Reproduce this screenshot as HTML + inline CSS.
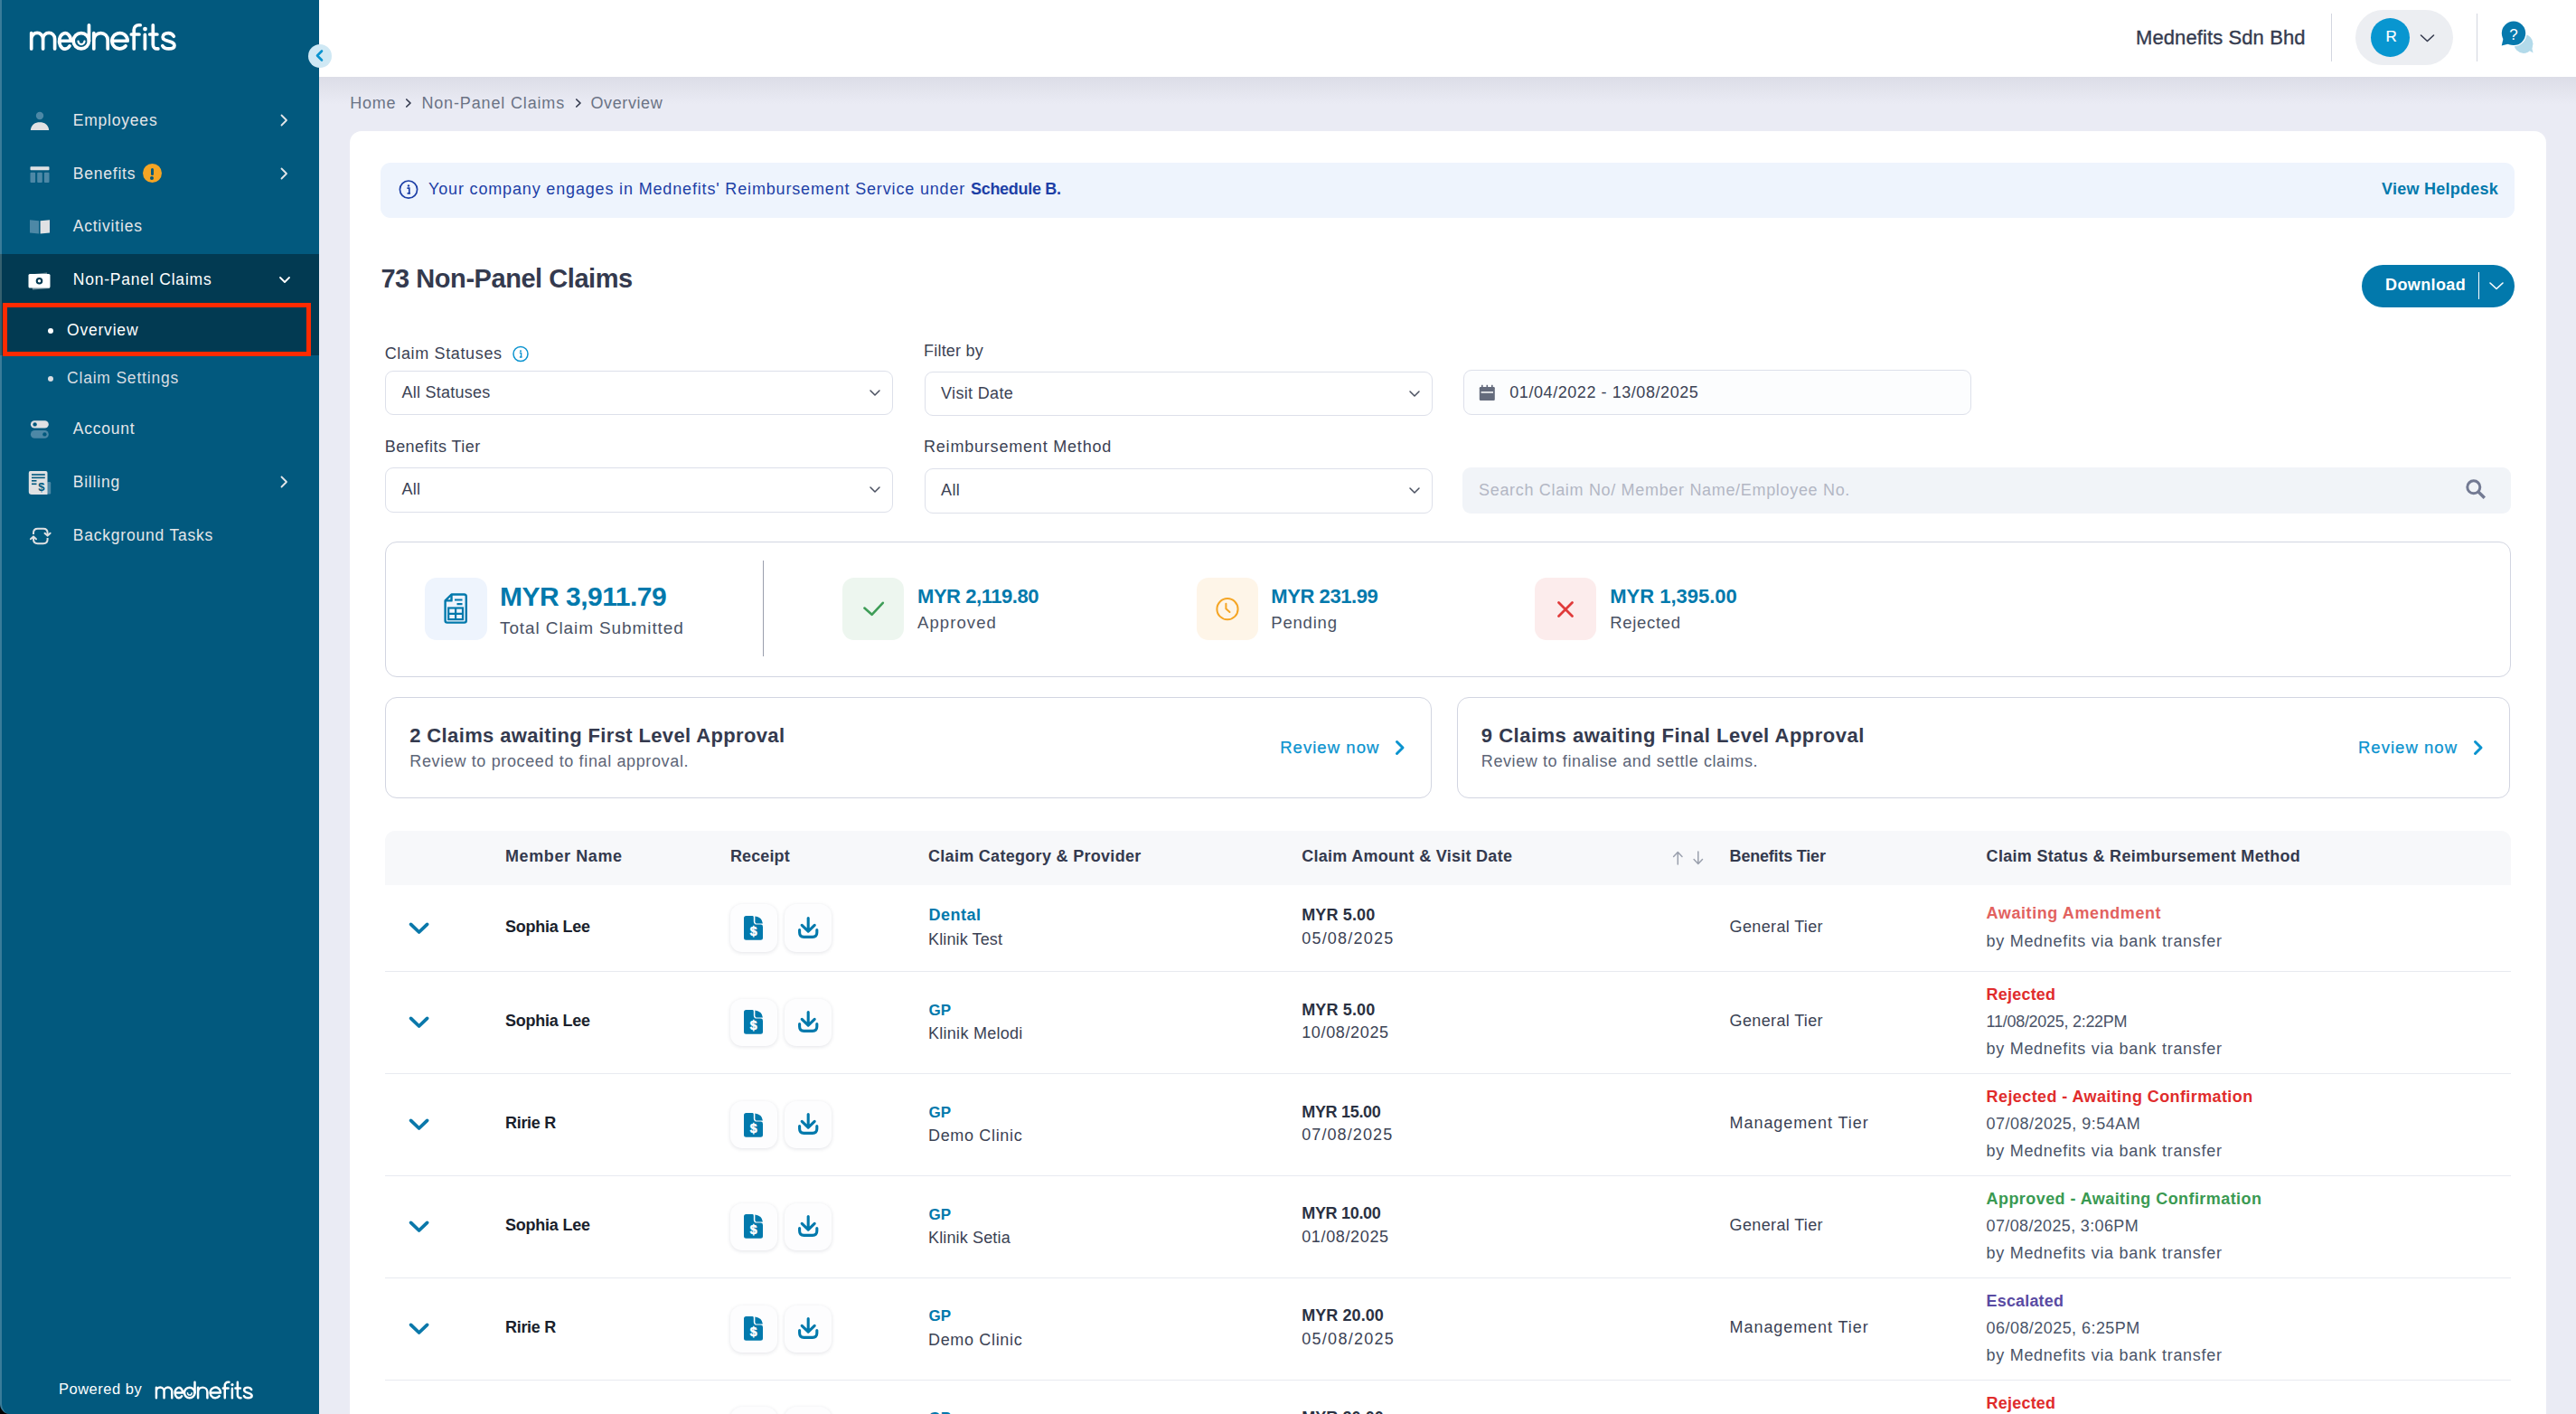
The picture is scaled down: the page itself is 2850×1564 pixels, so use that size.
<!DOCTYPE html><html><head><meta charset="utf-8"><title>Non-Panel Claims</title><style>
*{box-sizing:border-box}
html,body{margin:0;padding:0}
body{width:2850px;height:1564px;overflow:hidden;position:relative;background:#EAEBF4;font-family:"Liberation Sans",sans-serif}
.t{position:absolute;white-space:nowrap;line-height:1}
.logo{color:#fff;-webkit-text-stroke:0.9px #fff;font-weight:400}
#sb{position:absolute;left:0;top:0;width:353px;height:1564px;background:#02597E;border-left:2px solid #3A7C99;border-bottom-left-radius:11px}
#top{position:absolute;left:353px;top:0;width:2497px;height:85px;background:#FFFFFF}
#topshadow{position:absolute;left:353px;top:85px;width:2497px;height:30px;background:linear-gradient(#DCDDE7,#EAEBF4)}
#card{position:absolute;left:387px;top:145px;width:2430px;height:1500px;background:#FFFFFF;border-radius:13px}
.sel{position:absolute;border:1.3px solid #DDE0EA;border-radius:9px;background:#FFFFFF}
.box{position:absolute;border:1.3px solid #D2D5E1;border-radius:13px;background:#FFFFFF}
.rbtn{position:absolute;width:52.4px;height:52.4px;border-radius:13px;background:#FDFDFE;box-shadow:0 1px 4px rgba(30,40,70,0.13)}
</style></head><body>
<div style="position:absolute;left:0;top:1544px;width:20px;height:20px;background:#000"></div>
<div id="sb"></div>
<svg style="position:absolute;left:0;top:0" width="220" height="70" viewBox="0 0 220 70"><g fill="none" stroke="#FFFFFF" stroke-width="3.7" stroke-linecap="round" stroke-linejoin="round">
<path d="M34.7 36.6 V54 M34.7 42.9 A6.45 6.45 0 0 1 47.6 42.9 V54 M47.6 42.9 A6.5 6.5 0 0 1 60.6 42.9 V54"/>
<path d="M65.55 45.25 H81 M78.45 45.25 A6.45 8.65 0 1 0 77 50.9"/>
<circle cx="89.8" cy="45.25" r="8.65"/>
<path d="M98.45 27.8 V45.25"/>
<path d="M86.5 45.6 A3.5 3.5 0 0 0 93.5 45.6" stroke-width="2.2"/>
<path d="M103.8 36.6 V54 M103.8 44.25 A7.7 7.7 0 0 1 119.2 44.25 V54"/>
<path d="M123.85 45.25 H141.15 A8.65 8.65 0 1 0 139.1 50.8"/>
<path d="M148.2 54 V33 A5.2 5.2 0 0 1 153.4 27.75 H155.2 M145.3 38 H154"/>
<path d="M160.4 38.4 V54"/>
<path d="M169.3 27.8 V49.5 A4.45 4.45 0 0 0 173.75 53.95 H174.85 M165.7 38 H173.9"/>
<path d="M192.3 40.2 C191 37.5 188.5 36.55 186.2 36.55 C182.5 36.55 180.1 38.3 180.1 40.9 C180.1 43.6 182.5 44.4 186.3 45.5 C190.5 46.7 193 47.5 193 50.2 C193 52.6 190.3 53.95 186.5 53.95 C183.2 53.95 180.8 52.5 179.8 50.6"/>
</g><circle cx="160.5" cy="32.05" r="2.4" fill="#FFFFFF"/></svg>
<div style="position:absolute;left:2px;top:281px;width:351px;height:112px;background:#023A52"></div>
<div style="position:absolute;left:0;top:281px;width:2px;height:112px;background:#35606F"></div>
<div class="t " style="left:80.7px;top:125.2px;font-size:17.5px;color:#E4E6E9;letter-spacing:0.8px;">Employees</div>
<svg style="position:absolute;left:307px;top:125.2px" width="14" height="16" viewBox="0 0 14 16"><path d="M4.5 2.5 L10 8 L4.5 13.5" fill="none" stroke="#E4E6E9" stroke-width="1.8" stroke-linecap="round" stroke-linejoin="round"/></svg>
<div class="t " style="left:80.7px;top:184.4px;font-size:17.5px;color:#E4E6E9;letter-spacing:0.8px;">Benefits</div>
<svg style="position:absolute;left:307px;top:184.4px" width="14" height="16" viewBox="0 0 14 16"><path d="M4.5 2.5 L10 8 L4.5 13.5" fill="none" stroke="#E4E6E9" stroke-width="1.8" stroke-linecap="round" stroke-linejoin="round"/></svg>
<div class="t " style="left:80.7px;top:242.0px;font-size:17.5px;color:#E4E6E9;letter-spacing:0.8px;">Activities</div>
<div class="t " style="left:80.7px;top:301.4px;font-size:17.5px;color:#FFFFFF;letter-spacing:0.8px;">Non-Panel Claims</div>
<svg style="position:absolute;left:307px;top:303.4px" width="16" height="14" viewBox="0 0 16 14"><path d="M3 4 L8 9 L13 4" fill="none" stroke="#FFFFFF" stroke-width="1.8" stroke-linecap="round" stroke-linejoin="round"/></svg>
<div class="t " style="left:80.7px;top:466.2px;font-size:17.5px;color:#E4E6E9;letter-spacing:0.8px;">Account</div>
<div class="t " style="left:80.7px;top:525.2px;font-size:17.5px;color:#E4E6E9;letter-spacing:0.8px;">Billing</div>
<svg style="position:absolute;left:307px;top:525.2px" width="14" height="16" viewBox="0 0 14 16"><path d="M4.5 2.5 L10 8 L4.5 13.5" fill="none" stroke="#E4E6E9" stroke-width="1.8" stroke-linecap="round" stroke-linejoin="round"/></svg>
<div class="t " style="left:80.7px;top:584.2px;font-size:17.5px;color:#E4E6E9;letter-spacing:0.8px;">Background Tasks</div>
<div style="position:absolute;left:53px;top:363px;width:6px;height:6px;border-radius:50%;background:#fff"></div>
<div class="t " style="left:74.0px;top:356.9px;font-size:17.5px;color:#FFFFFF;letter-spacing:0.8px;">Overview</div>
<div style="position:absolute;left:53px;top:416px;width:6px;height:6px;border-radius:50%;background:#D8DDE2"></div>
<div class="t " style="left:74.0px;top:410.0px;font-size:17.5px;color:#D8DDE2;letter-spacing:0.8px;">Claim Settings</div>
<div style="position:absolute;left:3px;top:335px;width:341px;height:58.7px;border:5px solid #FF2A00"></div>
<svg style="position:absolute;left:30px;top:118px" width="30" height="30" viewBox="0 0 30 30">
<circle cx="14" cy="10" r="4.2" fill="#4D88A6"/>
<path d="M3.8 25.9 C4.5 19.5 9 17.2 14 17.2 C19 17.2 23.5 19.5 24.2 25.9 Z" fill="#E0E1E3"/></svg>
<svg style="position:absolute;left:30px;top:180px" width="30" height="30" viewBox="0 0 30 30">
<rect x="3.5" y="4.3" width="21" height="4" rx="0.8" fill="#E0E1E3"/>
<rect x="3.5" y="10.8" width="5.6" height="11.2" rx="1" fill="#4D88A6"/>
<rect x="11.2" y="10.8" width="5.6" height="11.2" rx="1" fill="#4D88A6"/>
<rect x="18.9" y="10.8" width="5.6" height="11.2" rx="1" fill="#4D88A6"/></svg>
<div style="position:absolute;left:157.7px;top:181.3px;width:21px;height:21px;border-radius:50%;background:#F5A524"></div>
<div style="position:absolute;left:166.6px;top:185.5px;width:3.4px;height:8px;border-radius:1.5px;background:#02597E"></div>
<div style="position:absolute;left:166.4px;top:195px;width:3.8px;height:3.8px;border-radius:50%;background:#02597E"></div>
<svg style="position:absolute;left:30px;top:238px" width="30" height="26" viewBox="0 0 30 26">
<path d="M3 5.2 L13 6.2 L13 20.5 L3 19.5 Z" fill="#4D88A6"/>
<path d="M14.6 6.2 L25 5.2 L25 19.5 L14.6 20.5 Z" fill="#E0E1E3"/></svg>
<svg style="position:absolute;left:30px;top:298px" width="30" height="26" viewBox="0 0 30 26">
<path d="M3.5 5.5 L22 3.5 L25 21 L6 22.5 Z" fill="#BFC9CF" opacity="0.6"/>
<rect x="1.5" y="5" width="24" height="15.5" rx="1.5" fill="#FFFFFF"/>
<circle cx="13.5" cy="12.7" r="3.8" fill="#023A52"/><circle cx="13.5" cy="12.7" r="1.7" fill="#FFFFFF"/></svg>
<svg style="position:absolute;left:30px;top:462px" width="30" height="26" viewBox="0 0 30 26">
<rect x="3.9" y="3.2" width="19.9" height="8.4" rx="4.2" fill="#E0E1E3"/>
<circle cx="8.6" cy="7.4" r="2.2" fill="#02597E"/>
<rect x="3.9" y="14" width="19.9" height="8.8" rx="4.4" fill="#4D88A6"/>
<circle cx="19.4" cy="18.4" r="2.2" fill="#02597E"/></svg>
<svg style="position:absolute;left:30px;top:519px" width="30" height="30" viewBox="0 0 30 30">
<rect x="22" y="14" width="4.2" height="13.5" rx="1.2" fill="#4D88A6"/>
<path d="M3.5 2 H20.5 Q22.5 2 22.5 4 V28 H5 Q1.8 28 1.8 25 V4 Q1.8 2 3.5 2 Z" fill="#E0E1E3"/>
<rect x="5" y="5.2" width="14.8" height="1.6" fill="#02597E"/>
<rect x="5" y="8.6" width="14.8" height="1.6" fill="#02597E"/>
<rect x="5" y="12" width="5.5" height="1.6" fill="#02597E"/>
<rect x="5" y="15.5" width="5.5" height="1.6" fill="#02597E"/>
<text x="15.8" y="24" font-family="Liberation Sans" font-weight="700" font-size="13" fill="#02597E" text-anchor="middle">$</text></svg>
<svg style="position:absolute;left:30px;top:580px" width="30" height="26" viewBox="0 0 30 26">
<path d="M7 11 V9.5 Q7 4.8 11.7 4.8 H18 Q22.6 4.8 22.6 9.5 V11.8" fill="none" stroke="#E0E1E3" stroke-width="2"/>
<path d="M19.5 9.8 L22.6 12.6 L25.6 9.8" fill="none" stroke="#E0E1E3" stroke-width="2" stroke-linecap="round" stroke-linejoin="round"/>
<path d="M22.6 15 V16.5 Q22.6 21.2 17.9 21.2 H11.7 Q7 21.2 7 16.5 V14.2" fill="none" stroke="#E0E1E3" stroke-width="2"/>
<path d="M3.9 16.2 L7 13.4 L10 16.2" fill="none" stroke="#E0E1E3" stroke-width="2" stroke-linecap="round" stroke-linejoin="round"/></svg>
<div class="t " style="left:65.0px;top:1528.4px;font-size:16.5px;color:#FFFFFF;letter-spacing:0.5px;">Powered by</div>
<svg style="position:absolute;left:0;top:1480px" width="320" height="84" viewBox="0 1480 320 84"><g transform="translate(149.76 1510.20) scale(0.668)"><g fill="none" stroke="#FFFFFF" stroke-width="3.7" stroke-linecap="round" stroke-linejoin="round">
<path d="M34.7 36.6 V54 M34.7 42.9 A6.45 6.45 0 0 1 47.6 42.9 V54 M47.6 42.9 A6.5 6.5 0 0 1 60.6 42.9 V54"/>
<path d="M65.55 45.25 H81 M78.45 45.25 A6.45 8.65 0 1 0 77 50.9"/>
<circle cx="89.8" cy="45.25" r="8.65"/>
<path d="M98.45 27.8 V45.25"/>
<path d="M86.5 45.6 A3.5 3.5 0 0 0 93.5 45.6" stroke-width="2.2"/>
<path d="M103.8 36.6 V54 M103.8 44.25 A7.7 7.7 0 0 1 119.2 44.25 V54"/>
<path d="M123.85 45.25 H141.15 A8.65 8.65 0 1 0 139.1 50.8"/>
<path d="M148.2 54 V33 A5.2 5.2 0 0 1 153.4 27.75 H155.2 M145.3 38 H154"/>
<path d="M160.4 38.4 V54"/>
<path d="M169.3 27.8 V49.5 A4.45 4.45 0 0 0 173.75 53.95 H174.85 M165.7 38 H173.9"/>
<path d="M192.3 40.2 C191 37.5 188.5 36.55 186.2 36.55 C182.5 36.55 180.1 38.3 180.1 40.9 C180.1 43.6 182.5 44.4 186.3 45.5 C190.5 46.7 193 47.5 193 50.2 C193 52.6 190.3 53.95 186.5 53.95 C183.2 53.95 180.8 52.5 179.8 50.6"/>
</g><circle cx="160.5" cy="32.05" r="2.4" fill="#FFFFFF"/></g></svg>
<div id="top"></div>
<div id="topshadow"></div>
<div class="t " style="left:2363.0px;top:31.4px;font-size:22px;color:#343A4E;letter-spacing:0.1px;-webkit-text-stroke:0.35px #343A4E;">Mednefits Sdn Bhd</div>
<div style="position:absolute;left:2579px;top:15px;width:1px;height:53px;background:#D3D6E0"></div>
<div style="position:absolute;left:2606px;top:11px;width:108px;height:61px;border-radius:31px;background:#ECEEF2"></div>
<div style="position:absolute;left:2623px;top:19.5px;width:43px;height:43px;border-radius:50%;background:#0896D0"></div>
<div class="t " style="left:2639.5px;top:31.8px;font-size:17px;color:#FFFFFF;letter-spacing:0px;-webkit-text-stroke:0.2px #fff;">R</div>
<svg style="position:absolute;left:2676px;top:34px" width="20" height="16" viewBox="0 0 20 16"><path d="M2.5 5 L9.5 11.5 L16.5 5" fill="none" stroke="#343A4E" stroke-width="1.6" stroke-linecap="round" stroke-linejoin="round"/></svg>
<div style="position:absolute;left:2740px;top:15px;width:1px;height:53px;background:#D3D6E0"></div>
<svg style="position:absolute;left:2760px;top:18px" width="50" height="46" viewBox="0 0 50 46">
<circle cx="32" cy="30.4" r="10.5" fill="#B3DAEA"/>
<path d="M36.5 37 L42.6 40.6 L40.8 33.5 Z" fill="#B3DAEA"/>
<circle cx="21" cy="18.8" r="14.5" fill="#FFFFFF"/>
<circle cx="21" cy="18.8" r="13.2" fill="#0779AD"/>
<path d="M9.6 24.5 L7.7 32.6 L15.5 30.4 Z" fill="#0779AD"/>
<text x="21" y="26.2" font-family="Liberation Sans" font-size="17" fill="#FFFFFF" text-anchor="middle">?</text></svg>
<div style="position:absolute;left:341px;top:49px;width:26px;height:26px;border-radius:50%;background:#CFE8F4"></div>
<svg style="position:absolute;left:341px;top:49px" width="26" height="26" viewBox="0 0 26 26"><path d="M15 7.5 L10 12.5 L15 17.5" fill="none" stroke="#0A93CF" stroke-width="2.6" stroke-linecap="round" stroke-linejoin="round"/></svg>
<div class="t " style="left:387.3px;top:105.2px;font-size:18px;color:#6B7385;letter-spacing:0.75px;">Home</div>
<svg style="position:absolute;left:446px;top:106px" width="12" height="16" viewBox="0 0 12 16"><path d="M3.8 4 L8 8 L3.8 12" fill="none" stroke="#343A4E" stroke-width="1.7" stroke-linecap="round" stroke-linejoin="round"/></svg>
<div class="t " style="left:466.4px;top:105.2px;font-size:18px;color:#6B7385;letter-spacing:0.85px;">Non-Panel Claims</div>
<svg style="position:absolute;left:633.5px;top:106px" width="12" height="16" viewBox="0 0 12 16"><path d="M3.8 4 L8 8 L3.8 12" fill="none" stroke="#343A4E" stroke-width="1.7" stroke-linecap="round" stroke-linejoin="round"/></svg>
<div class="t " style="left:653.4px;top:105.2px;font-size:18px;color:#6B7385;letter-spacing:0.62px;">Overview</div>
<div id="card"></div>
<div style="position:absolute;left:421px;top:180px;width:2361px;height:61px;border-radius:11px;background:#EEF4FD"></div>
<svg style="position:absolute;left:440px;top:198px" width="24" height="24" viewBox="0 0 24 24">
<circle cx="12" cy="11.6" r="9.6" fill="none" stroke="#1D3FA6" stroke-width="1.7"/>
<circle cx="12" cy="7.4" r="1.2" fill="#1D3FA6"/><path d="M10.4 10.2 H12.8 V15.6 M10.6 15.8 H14" fill="none" stroke="#1D3FA6" stroke-width="1.7"/></svg>
<div class="t " style="left:474.0px;top:199.8px;font-size:18px;color:#1D3FA6;letter-spacing:0.84px;">Your company engages in Mednefits' Reimbursement Service under <b style="letter-spacing:-0.3px">Schedule B.</b></div>
<div class="t " style="left:2635.0px;top:199.8px;font-size:18px;color:#0279AC;font-weight:700;letter-spacing:0.25px;">View Helpdesk</div>
<div class="t " style="left:421.4px;top:293.5px;font-size:29px;color:#343A4E;font-weight:700;letter-spacing:-0.45px;">73 Non-Panel Claims</div>
<div style="position:absolute;left:2613px;top:293px;width:169px;height:47px;border-radius:24px;background:#0279AC"></div>
<div class="t " style="left:2639.0px;top:305.8px;font-size:18px;color:#FFFFFF;font-weight:700;letter-spacing:0.38px;">Download</div>
<div style="position:absolute;left:2741.5px;top:301px;width:1.5px;height:30px;background:#FFFFFF"></div>
<svg style="position:absolute;left:2752px;top:308px" width="20" height="16" viewBox="0 0 20 16"><path d="M3 5 L10 11.5 L17 5" fill="none" stroke="#FFFFFF" stroke-width="1.6" stroke-linecap="round" stroke-linejoin="round"/></svg>
<div class="t " style="left:425.7px;top:382.3px;font-size:18px;color:#3B4254;letter-spacing:0.64px;">Claim Statuses</div>
<svg style="position:absolute;left:566px;top:382px" width="20" height="20" viewBox="0 0 20 20">
<circle cx="10" cy="9.5" r="8" fill="none" stroke="#0A93CF" stroke-width="1.5"/>
<circle cx="10" cy="6.2" r="1" fill="#0A93CF"/><path d="M8.8 8.4 H10.6 V12.8 M8.9 13 H11.6" fill="none" stroke="#0A93CF" stroke-width="1.4"/></svg>
<div class="t " style="left:1022.0px;top:378.5px;font-size:18px;color:#3B4254;letter-spacing:0.22px;">Filter by</div>
<div class="t " style="left:425.7px;top:485.3px;font-size:18px;color:#3B4254;letter-spacing:0.45px;">Benefits Tier</div>
<div class="t " style="left:1022.0px;top:485.3px;font-size:18px;color:#3B4254;letter-spacing:0.8px;">Reimbursement Method</div>
<div class="sel" style="left:426px;top:410.3px;width:562px;height:49px"></div>
<div class="t " style="left:444.5px;top:425.3px;font-size:18px;color:#3B4254;letter-spacing:0.25px;">All Statuses</div>
<svg style="position:absolute;left:960px;top:426.3px" width="16" height="16" viewBox="0 0 16 16"><path d="M3 6 L8 11 L13 6" fill="none" stroke="#4A5060" stroke-width="1.5" stroke-linecap="round" stroke-linejoin="round"/></svg>
<div class="sel" style="left:1022.6px;top:410.5px;width:562px;height:49px"></div>
<div class="t " style="left:1041.1px;top:425.5px;font-size:18px;color:#3B4254;letter-spacing:0.33px;">Visit Date</div>
<svg style="position:absolute;left:1556.6px;top:426.5px" width="16" height="16" viewBox="0 0 16 16"><path d="M3 6 L8 11 L13 6" fill="none" stroke="#4A5060" stroke-width="1.5" stroke-linecap="round" stroke-linejoin="round"/></svg>
<div class="sel" style="left:426px;top:517.4px;width:562px;height:50px"></div>
<div class="t " style="left:444.5px;top:532.4px;font-size:18px;color:#3B4254;letter-spacing:0.3px;">All</div>
<svg style="position:absolute;left:960px;top:533.4px" width="16" height="16" viewBox="0 0 16 16"><path d="M3 6 L8 11 L13 6" fill="none" stroke="#4A5060" stroke-width="1.5" stroke-linecap="round" stroke-linejoin="round"/></svg>
<div class="sel" style="left:1022.6px;top:517.6px;width:562px;height:50px"></div>
<div class="t " style="left:1041.1px;top:532.6px;font-size:18px;color:#3B4254;letter-spacing:0.3px;">All</div>
<svg style="position:absolute;left:1556.6px;top:533.6px" width="16" height="16" viewBox="0 0 16 16"><path d="M3 6 L8 11 L13 6" fill="none" stroke="#4A5060" stroke-width="1.5" stroke-linecap="round" stroke-linejoin="round"/></svg>
<div class="sel" style="left:1618.6px;top:409.3px;width:562px;height:50px;background:#FCFDFE"></div>
<svg style="position:absolute;left:1635px;top:424px" width="20" height="20" viewBox="0 0 20 20">
<rect x="1.8" y="4" width="17" height="15" rx="1.2" fill="#646B7C"/>
<rect x="4" y="1.8" width="1.6" height="3.5" fill="#646B7C"/><rect x="9.5" y="1.8" width="1.6" height="3.5" fill="#646B7C"/><rect x="15" y="1.8" width="1.6" height="3.5" fill="#646B7C"/>
<rect x="3.6" y="9.2" width="13.4" height="1.5" fill="#FFFFFF"/></svg>
<div class="t " style="left:1670.3px;top:424.8px;font-size:18px;color:#3B4254;letter-spacing:0.56px;">01/04/2022 - 13/08/2025</div>
<div style="position:absolute;left:1618px;top:516.5px;width:1159.6px;height:51.3px;border-radius:9px;background:#F1F4F8"></div>
<div class="t " style="left:1636.0px;top:533.2px;font-size:18px;color:#B3B7C4;letter-spacing:0.68px;">Search Claim No/ Member Name/Employee No.</div>
<svg style="position:absolute;left:2726px;top:528px" width="26" height="26" viewBox="0 0 26 26">
<circle cx="10.8" cy="10.8" r="7" fill="none" stroke="#737A93" stroke-width="3"/>
<path d="M16 16 L22.8 22.8" stroke="#737A93" stroke-width="3.4" stroke-linecap="butt"/></svg>
<div class="box" style="left:426px;top:598.5px;width:2351.6px;height:150px"></div>
<div style="position:absolute;left:470px;top:639px;width:68.5px;height:68.5px;border-radius:13px;background:#EEF4FD"></div>
<div style="position:absolute;left:931.7px;top:639px;width:68.5px;height:68.5px;border-radius:13px;background:#EDF6EF"></div>
<div style="position:absolute;left:1323.6px;top:639px;width:68.5px;height:68.5px;border-radius:13px;background:#FEF5E8"></div>
<div style="position:absolute;left:1697.9px;top:639px;width:68.5px;height:68.5px;border-radius:13px;background:#FCECEC"></div>
<svg style="position:absolute;left:490px;top:655px" width="30" height="38" viewBox="0 0 30 38">
<path d="M9.5 2.5 H23.5 Q25.8 2.5 25.8 4.8 V31.5 Q25.8 33.6 23.5 33.6 H4.8 Q2.6 33.6 2.6 31.5 V9.4 Z" fill="none" stroke="#0279AC" stroke-width="2.4" stroke-linejoin="round"/>
<path d="M9.5 2.5 V9.4 H2.6" fill="none" stroke="#0279AC" stroke-width="2.4" stroke-linejoin="round"/>
<path d="M13 8.5 H21.5 M15.5 13.2 H21.5" stroke="#0279AC" stroke-width="2.2"/>
<rect x="6.2" y="17.5" width="15.8" height="12.6" fill="none" stroke="#0279AC" stroke-width="2.2"/>
<path d="M6.2 23.8 H22 M14.1 17.5 V30.1" stroke="#0279AC" stroke-width="2.2"/></svg>
<svg style="position:absolute;left:950px;top:658px" width="32" height="32" viewBox="0 0 32 32">
<path d="M6.4 14.6 L14.6 21.8 L26.8 8.8" fill="none" stroke="#3E9D57" stroke-width="2.6" stroke-linecap="round" stroke-linejoin="round"/></svg>
<svg style="position:absolute;left:1342px;top:658px" width="32" height="32" viewBox="0 0 32 32">
<circle cx="16" cy="15.7" r="11.6" fill="none" stroke="#F5A524" stroke-width="2"/>
<path d="M14.4 9.8 V15.3 L18.5 19" fill="none" stroke="#F5A524" stroke-width="2" stroke-linecap="round"/></svg>
<svg style="position:absolute;left:1716px;top:658px" width="32" height="32" viewBox="0 0 32 32">
<path d="M8.5 8.5 L23.5 23.5 M23.5 8.5 L8.5 23.5" fill="none" stroke="#E03A3A" stroke-width="2.8" stroke-linecap="round"/></svg>
<div class="t " style="left:553.0px;top:644.6px;font-size:30px;color:#0279AC;font-weight:700;letter-spacing:-0.5px;">MYR 3,911.79</div>
<div class="t " style="left:553.0px;top:685.3px;font-size:19px;color:#4A5264;letter-spacing:0.9px;">Total Claim Submitted</div>
<div style="position:absolute;left:844px;top:620px;width:1.3px;height:106px;background:#9A9FAD"></div>
<div class="t " style="left:1015.0px;top:648.6px;font-size:22px;color:#0279AC;font-weight:700;letter-spacing:-0.45px;">MYR 2,119.80</div>
<div class="t " style="left:1015.0px;top:679.7px;font-size:18.5px;color:#4A5264;letter-spacing:1.1px;">Approved</div>
<div class="t " style="left:1406.3px;top:648.6px;font-size:22px;color:#0279AC;font-weight:700;letter-spacing:-0.43px;">MYR 231.99</div>
<div class="t " style="left:1406.3px;top:679.7px;font-size:18.5px;color:#4A5264;letter-spacing:0.8px;">Pending</div>
<div class="t " style="left:1781.2px;top:648.6px;font-size:22px;color:#0279AC;font-weight:700;letter-spacing:0.0px;">MYR 1,395.00</div>
<div class="t " style="left:1781.2px;top:679.7px;font-size:18.5px;color:#4A5264;letter-spacing:0.7px;">Rejected</div>
<div class="box" style="left:426px;top:771px;width:1158.3px;height:112px"></div>
<div class="t " style="left:453.3px;top:802.6px;font-size:22px;color:#343A4E;font-weight:700;letter-spacing:0.36px;">2 Claims awaiting First Level Approval</div>
<div class="t " style="left:453.3px;top:833.1px;font-size:18px;color:#5C6577;letter-spacing:0.63px;">Review to proceed to final approval.</div>
<div class="t " style="left:1416.2px;top:817.8px;font-size:18.5px;color:#0A93CF;letter-spacing:1.044px;-webkit-text-stroke:0.25px #0A93CF;">Review now</div>
<svg style="position:absolute;left:1541.3px;top:817px" width="16" height="20" viewBox="0 0 16 20"><path d="M4.5 3.5 L11 10 L4.5 16.5" fill="none" stroke="#0A93CF" stroke-width="3" stroke-linecap="round" stroke-linejoin="round"/></svg>
<div class="box" style="left:1611.5px;top:771px;width:1165.5px;height:112px"></div>
<div class="t " style="left:1638.8px;top:802.6px;font-size:22px;color:#343A4E;font-weight:700;letter-spacing:0.5px;">9 Claims awaiting Final Level Approval</div>
<div class="t " style="left:1638.8px;top:833.1px;font-size:18px;color:#5C6577;letter-spacing:0.6px;">Review to finalise and settle claims.</div>
<div class="t " style="left:2608.9px;top:817.8px;font-size:18.5px;color:#0A93CF;letter-spacing:1.044px;-webkit-text-stroke:0.25px #0A93CF;">Review now</div>
<svg style="position:absolute;left:2734.0px;top:817px" width="16" height="20" viewBox="0 0 16 20"><path d="M4.5 3.5 L11 10 L4.5 16.5" fill="none" stroke="#0A93CF" stroke-width="3" stroke-linecap="round" stroke-linejoin="round"/></svg>
<div style="position:absolute;left:426px;top:918.5px;width:2351.6px;height:60.3px;border-radius:11px 11px 0 0;background:#F7F8FA"></div>
<div class="t " style="left:559.0px;top:938.3px;font-size:18px;color:#343A4E;font-weight:700;letter-spacing:0.6px;">Member Name</div>
<div class="t " style="left:808.0px;top:938.3px;font-size:18px;color:#343A4E;font-weight:700;letter-spacing:0.1px;">Receipt</div>
<div class="t " style="left:1027.0px;top:938.3px;font-size:18px;color:#343A4E;font-weight:700;letter-spacing:0.3px;">Claim Category &amp; Provider</div>
<div class="t " style="left:1440.2px;top:938.3px;font-size:18px;color:#343A4E;font-weight:700;letter-spacing:0.28px;">Claim Amount &amp; Visit Date</div>
<div class="t " style="left:1913.6px;top:938.3px;font-size:18px;color:#343A4E;font-weight:700;letter-spacing:-0.2px;">Benefits Tier</div>
<div class="t " style="left:2197.6px;top:938.3px;font-size:18px;color:#343A4E;font-weight:700;letter-spacing:0.3px;">Claim Status &amp; Reimbursement Method</div>
<svg style="position:absolute;left:1848px;top:940px" width="40" height="18" viewBox="0 0 40 18">
<path d="M8.3 16 V3 M3.6 7.5 L8.3 2.6 L13 7.5" fill="none" stroke="#9AA0AD" stroke-width="1.5" stroke-linecap="round" stroke-linejoin="round"/>
<path d="M30.8 2 V15 M26.1 10.5 L30.8 15.4 L35.5 10.5" fill="none" stroke="#9AA0AD" stroke-width="1.5" stroke-linecap="round" stroke-linejoin="round"/></svg>
<div style="position:absolute;left:426px;top:1073.7px;width:2351.6px;height:1.3px;background:#E8EAF0"></div>
<svg style="position:absolute;left:450px;top:1014.5px" width="28" height="24" viewBox="0 0 28 24"><path d="M4.6 7.4 L13.6 16 L22.6 7.4" fill="none" stroke="#0A78AA" stroke-width="3.8" stroke-linecap="round" stroke-linejoin="round"/></svg>
<div class="t " style="left:559.0px;top:1015.8px;font-size:18px;color:#1A1F2C;font-weight:700;letter-spacing:-0.226px;">Sophia Lee</div>
<div class="rbtn" style="left:807.8px;top:1000.2px"></div>
<div class="rbtn" style="left:868px;top:1000.2px"></div>
<svg style="position:absolute;left:822.7px;top:1012.9px" width="22" height="28" viewBox="0 0 22 28">
<path d="M2.5 0 H9.4 Q10.7 0 10.8 1.4 V6.2 Q11 9.5 14.2 9.6 H18.6 Q21 9.6 21 12 V24.3 Q21 26.8 18.5 26.8 H2.5 Q0 26.8 0 24.3 V2.5 Q0 0 2.5 0 Z" fill="#0279AC"/>
<path d="M12.4 0.5 Q20.2 1.5 20.9 8.6 H14.6 Q12.4 8.6 12.4 6.4 Z" fill="#0279AC"/>
<text x="10.6" y="22.3" font-family="Liberation Sans" font-weight="700" font-size="14" fill="#FFFFFF" stroke="#FFFFFF" stroke-width="0.5" text-anchor="middle">$</text></svg>
<svg style="position:absolute;left:880px;top:1012.5px" width="28" height="28" viewBox="0 0 28 28">
<path d="M14.2 2.6 V16.2 M7.2 10.3 L14.2 17.2 L21.2 10.3" fill="none" stroke="#0279AC" stroke-width="3.1" stroke-linecap="round" stroke-linejoin="round"/>
<path d="M4.6 15.6 V18.6 Q4.6 23.4 9.4 23.4 H19 Q23.8 23.4 23.8 18.6 V15.6" fill="none" stroke="#0279AC" stroke-width="3.1" stroke-linecap="round"/></svg>
<div class="t " style="left:1027.5px;top:1002.9px;font-size:18px;color:#0279AC;font-weight:700;letter-spacing:0.482px;">Dental</div>
<div class="t " style="left:1027.0px;top:1029.5px;font-size:18px;color:#3B4254;letter-spacing:0.127px;">Klinik Test</div>
<div class="t " style="left:1440.2px;top:1003.0px;font-size:18px;color:#2A3142;font-weight:700;letter-spacing:0.141px;">MYR 5.00</div>
<div class="t " style="left:1440.2px;top:1028.8px;font-size:18px;color:#3B4254;letter-spacing:1.212px;">05/08/2025</div>
<div class="t " style="left:1913.6px;top:1015.8px;font-size:18px;color:#3B4254;letter-spacing:0.355px;">General Tier</div>
<div class="t " style="left:2197.6px;top:1000.9px;font-size:18px;color:#E2625F;font-weight:700;letter-spacing:0.585px;">Awaiting Amendment</div>
<div class="t " style="left:2197.6px;top:1032.4px;font-size:18px;color:#4A5468;letter-spacing:0.696px;">by Mednefits via bank transfer</div>
<div style="position:absolute;left:426px;top:1187.2px;width:2351.6px;height:1.3px;background:#E8EAF0"></div>
<svg style="position:absolute;left:450px;top:1119.0px" width="28" height="24" viewBox="0 0 28 24"><path d="M4.6 7.4 L13.6 16 L22.6 7.4" fill="none" stroke="#0A78AA" stroke-width="3.8" stroke-linecap="round" stroke-linejoin="round"/></svg>
<div class="t " style="left:559.0px;top:1120.3px;font-size:18px;color:#1A1F2C;font-weight:700;letter-spacing:-0.226px;">Sophia Lee</div>
<div class="rbtn" style="left:807.8px;top:1104.7px"></div>
<div class="rbtn" style="left:868px;top:1104.7px"></div>
<svg style="position:absolute;left:822.7px;top:1117.4px" width="22" height="28" viewBox="0 0 22 28">
<path d="M2.5 0 H9.4 Q10.7 0 10.8 1.4 V6.2 Q11 9.5 14.2 9.6 H18.6 Q21 9.6 21 12 V24.3 Q21 26.8 18.5 26.8 H2.5 Q0 26.8 0 24.3 V2.5 Q0 0 2.5 0 Z" fill="#0279AC"/>
<path d="M12.4 0.5 Q20.2 1.5 20.9 8.6 H14.6 Q12.4 8.6 12.4 6.4 Z" fill="#0279AC"/>
<text x="10.6" y="22.3" font-family="Liberation Sans" font-weight="700" font-size="14" fill="#FFFFFF" stroke="#FFFFFF" stroke-width="0.5" text-anchor="middle">$</text></svg>
<svg style="position:absolute;left:880px;top:1117.0px" width="28" height="28" viewBox="0 0 28 28">
<path d="M14.2 2.6 V16.2 M7.2 10.3 L14.2 17.2 L21.2 10.3" fill="none" stroke="#0279AC" stroke-width="3.1" stroke-linecap="round" stroke-linejoin="round"/>
<path d="M4.6 15.6 V18.6 Q4.6 23.4 9.4 23.4 H19 Q23.8 23.4 23.8 18.6 V15.6" fill="none" stroke="#0279AC" stroke-width="3.1" stroke-linecap="round"/></svg>
<div class="t " style="left:1027.5px;top:1108.6px;font-size:17px;color:#0279AC;font-weight:700;letter-spacing:0px;">GP</div>
<div class="t " style="left:1027.0px;top:1134.0px;font-size:18px;color:#3B4254;letter-spacing:0.277px;">Klinik Melodi</div>
<div class="t " style="left:1440.2px;top:1107.5px;font-size:18px;color:#2A3142;font-weight:700;letter-spacing:0.141px;">MYR 5.00</div>
<div class="t " style="left:1440.2px;top:1133.3px;font-size:18px;color:#3B4254;letter-spacing:0.646px;">10/08/2025</div>
<div class="t " style="left:1913.6px;top:1120.3px;font-size:18px;color:#3B4254;letter-spacing:0.355px;">General Tier</div>
<div class="t " style="left:2197.6px;top:1091.0px;font-size:18px;color:#E02C2C;font-weight:700;letter-spacing:0.206px;">Rejected</div>
<div class="t " style="left:2197.6px;top:1121.3px;font-size:18px;color:#4A5468;letter-spacing:-0.284px;">11/08/2025, 2:22PM</div>
<div class="t " style="left:2197.6px;top:1151.0px;font-size:18px;color:#4A5468;letter-spacing:0.696px;">by Mednefits via bank transfer</div>
<div style="position:absolute;left:426px;top:1300.0px;width:2351.6px;height:1.3px;background:#E8EAF0"></div>
<svg style="position:absolute;left:450px;top:1232.1px" width="28" height="24" viewBox="0 0 28 24"><path d="M4.6 7.4 L13.6 16 L22.6 7.4" fill="none" stroke="#0A78AA" stroke-width="3.8" stroke-linecap="round" stroke-linejoin="round"/></svg>
<div class="t " style="left:559.0px;top:1233.4px;font-size:18px;color:#1A1F2C;font-weight:700;letter-spacing:-0.3px;">Ririe R</div>
<div class="rbtn" style="left:807.8px;top:1217.8px"></div>
<div class="rbtn" style="left:868px;top:1217.8px"></div>
<svg style="position:absolute;left:822.7px;top:1230.5px" width="22" height="28" viewBox="0 0 22 28">
<path d="M2.5 0 H9.4 Q10.7 0 10.8 1.4 V6.2 Q11 9.5 14.2 9.6 H18.6 Q21 9.6 21 12 V24.3 Q21 26.8 18.5 26.8 H2.5 Q0 26.8 0 24.3 V2.5 Q0 0 2.5 0 Z" fill="#0279AC"/>
<path d="M12.4 0.5 Q20.2 1.5 20.9 8.6 H14.6 Q12.4 8.6 12.4 6.4 Z" fill="#0279AC"/>
<text x="10.6" y="22.3" font-family="Liberation Sans" font-weight="700" font-size="14" fill="#FFFFFF" stroke="#FFFFFF" stroke-width="0.5" text-anchor="middle">$</text></svg>
<svg style="position:absolute;left:880px;top:1230.1px" width="28" height="28" viewBox="0 0 28 28">
<path d="M14.2 2.6 V16.2 M7.2 10.3 L14.2 17.2 L21.2 10.3" fill="none" stroke="#0279AC" stroke-width="3.1" stroke-linecap="round" stroke-linejoin="round"/>
<path d="M4.6 15.6 V18.6 Q4.6 23.4 9.4 23.4 H19 Q23.8 23.4 23.8 18.6 V15.6" fill="none" stroke="#0279AC" stroke-width="3.1" stroke-linecap="round"/></svg>
<div class="t " style="left:1027.5px;top:1221.7px;font-size:17px;color:#0279AC;font-weight:700;letter-spacing:0px;">GP</div>
<div class="t " style="left:1027.0px;top:1247.1px;font-size:18px;color:#3B4254;letter-spacing:0.668px;">Demo Clinic</div>
<div class="t " style="left:1440.2px;top:1220.6px;font-size:18px;color:#2A3142;font-weight:700;letter-spacing:-0.3px;">MYR 15.00</div>
<div class="t " style="left:1440.2px;top:1246.4px;font-size:18px;color:#3B4254;letter-spacing:1.101px;">07/08/2025</div>
<div class="t " style="left:1913.6px;top:1233.4px;font-size:18px;color:#3B4254;letter-spacing:0.926px;">Management Tier</div>
<div class="t " style="left:2197.6px;top:1204.1px;font-size:18px;color:#E02C2C;font-weight:700;letter-spacing:0.405px;">Rejected - Awaiting Confirmation</div>
<div class="t " style="left:2197.6px;top:1234.4px;font-size:18px;color:#4A5468;letter-spacing:0.465px;">07/08/2025, 9:54AM</div>
<div class="t " style="left:2197.6px;top:1264.1px;font-size:18px;color:#4A5468;letter-spacing:0.696px;">by Mednefits via bank transfer</div>
<div style="position:absolute;left:426px;top:1412.8px;width:2351.6px;height:1.3px;background:#E8EAF0"></div>
<svg style="position:absolute;left:450px;top:1344.9px" width="28" height="24" viewBox="0 0 28 24"><path d="M4.6 7.4 L13.6 16 L22.6 7.4" fill="none" stroke="#0A78AA" stroke-width="3.8" stroke-linecap="round" stroke-linejoin="round"/></svg>
<div class="t " style="left:559.0px;top:1346.2px;font-size:18px;color:#1A1F2C;font-weight:700;letter-spacing:-0.226px;">Sophia Lee</div>
<div class="rbtn" style="left:807.8px;top:1330.6px"></div>
<div class="rbtn" style="left:868px;top:1330.6px"></div>
<svg style="position:absolute;left:822.7px;top:1343.3px" width="22" height="28" viewBox="0 0 22 28">
<path d="M2.5 0 H9.4 Q10.7 0 10.8 1.4 V6.2 Q11 9.5 14.2 9.6 H18.6 Q21 9.6 21 12 V24.3 Q21 26.8 18.5 26.8 H2.5 Q0 26.8 0 24.3 V2.5 Q0 0 2.5 0 Z" fill="#0279AC"/>
<path d="M12.4 0.5 Q20.2 1.5 20.9 8.6 H14.6 Q12.4 8.6 12.4 6.4 Z" fill="#0279AC"/>
<text x="10.6" y="22.3" font-family="Liberation Sans" font-weight="700" font-size="14" fill="#FFFFFF" stroke="#FFFFFF" stroke-width="0.5" text-anchor="middle">$</text></svg>
<svg style="position:absolute;left:880px;top:1342.9px" width="28" height="28" viewBox="0 0 28 28">
<path d="M14.2 2.6 V16.2 M7.2 10.3 L14.2 17.2 L21.2 10.3" fill="none" stroke="#0279AC" stroke-width="3.1" stroke-linecap="round" stroke-linejoin="round"/>
<path d="M4.6 15.6 V18.6 Q4.6 23.4 9.4 23.4 H19 Q23.8 23.4 23.8 18.6 V15.6" fill="none" stroke="#0279AC" stroke-width="3.1" stroke-linecap="round"/></svg>
<div class="t " style="left:1027.5px;top:1334.5px;font-size:17px;color:#0279AC;font-weight:700;letter-spacing:0px;">GP</div>
<div class="t " style="left:1027.0px;top:1359.9px;font-size:18px;color:#3B4254;letter-spacing:0.145px;">Klinik Setia</div>
<div class="t " style="left:1440.2px;top:1333.4px;font-size:18px;color:#2A3142;font-weight:700;letter-spacing:-0.3px;">MYR 10.00</div>
<div class="t " style="left:1440.2px;top:1359.2px;font-size:18px;color:#3B4254;letter-spacing:0.646px;">01/08/2025</div>
<div class="t " style="left:1913.6px;top:1346.2px;font-size:18px;color:#3B4254;letter-spacing:0.355px;">General Tier</div>
<div class="t " style="left:2197.6px;top:1316.9px;font-size:18px;color:#3A9A52;font-weight:700;letter-spacing:0.43px;">Approved - Awaiting Confirmation</div>
<div class="t " style="left:2197.6px;top:1347.2px;font-size:18px;color:#4A5468;letter-spacing:0.348px;">07/08/2025, 3:06PM</div>
<div class="t " style="left:2197.6px;top:1376.9px;font-size:18px;color:#4A5468;letter-spacing:0.696px;">by Mednefits via bank transfer</div>
<div style="position:absolute;left:426px;top:1525.7px;width:2351.6px;height:1.3px;background:#E8EAF0"></div>
<svg style="position:absolute;left:450px;top:1457.8px" width="28" height="24" viewBox="0 0 28 24"><path d="M4.6 7.4 L13.6 16 L22.6 7.4" fill="none" stroke="#0A78AA" stroke-width="3.8" stroke-linecap="round" stroke-linejoin="round"/></svg>
<div class="t " style="left:559.0px;top:1459.0px;font-size:18px;color:#1A1F2C;font-weight:700;letter-spacing:-0.3px;">Ririe R</div>
<div class="rbtn" style="left:807.8px;top:1443.5px"></div>
<div class="rbtn" style="left:868px;top:1443.5px"></div>
<svg style="position:absolute;left:822.7px;top:1456.2px" width="22" height="28" viewBox="0 0 22 28">
<path d="M2.5 0 H9.4 Q10.7 0 10.8 1.4 V6.2 Q11 9.5 14.2 9.6 H18.6 Q21 9.6 21 12 V24.3 Q21 26.8 18.5 26.8 H2.5 Q0 26.8 0 24.3 V2.5 Q0 0 2.5 0 Z" fill="#0279AC"/>
<path d="M12.4 0.5 Q20.2 1.5 20.9 8.6 H14.6 Q12.4 8.6 12.4 6.4 Z" fill="#0279AC"/>
<text x="10.6" y="22.3" font-family="Liberation Sans" font-weight="700" font-size="14" fill="#FFFFFF" stroke="#FFFFFF" stroke-width="0.5" text-anchor="middle">$</text></svg>
<svg style="position:absolute;left:880px;top:1455.8px" width="28" height="28" viewBox="0 0 28 28">
<path d="M14.2 2.6 V16.2 M7.2 10.3 L14.2 17.2 L21.2 10.3" fill="none" stroke="#0279AC" stroke-width="3.1" stroke-linecap="round" stroke-linejoin="round"/>
<path d="M4.6 15.6 V18.6 Q4.6 23.4 9.4 23.4 H19 Q23.8 23.4 23.8 18.6 V15.6" fill="none" stroke="#0279AC" stroke-width="3.1" stroke-linecap="round"/></svg>
<div class="t " style="left:1027.5px;top:1447.4px;font-size:17px;color:#0279AC;font-weight:700;letter-spacing:0px;">GP</div>
<div class="t " style="left:1027.0px;top:1472.7px;font-size:18px;color:#3B4254;letter-spacing:0.668px;">Demo Clinic</div>
<div class="t " style="left:1440.2px;top:1446.2px;font-size:18px;color:#2A3142;font-weight:700;letter-spacing:0.076px;">MYR 20.00</div>
<div class="t " style="left:1440.2px;top:1472.0px;font-size:18px;color:#3B4254;letter-spacing:1.29px;">05/08/2025</div>
<div class="t " style="left:1913.6px;top:1459.0px;font-size:18px;color:#3B4254;letter-spacing:0.926px;">Management Tier</div>
<div class="t " style="left:2197.6px;top:1429.7px;font-size:18px;color:#5A4BA3;font-weight:700;letter-spacing:0.155px;">Escalated</div>
<div class="t " style="left:2197.6px;top:1460.0px;font-size:18px;color:#4A5468;letter-spacing:0.442px;">06/08/2025, 6:25PM</div>
<div class="t " style="left:2197.6px;top:1489.7px;font-size:18px;color:#4A5468;letter-spacing:0.696px;">by Mednefits via bank transfer</div>
<svg style="position:absolute;left:450px;top:1570.6px" width="28" height="24" viewBox="0 0 28 24"><path d="M4.6 7.4 L13.6 16 L22.6 7.4" fill="none" stroke="#0A78AA" stroke-width="3.8" stroke-linecap="round" stroke-linejoin="round"/></svg>
<div class="t " style="left:559.0px;top:1571.9px;font-size:18px;color:#1A1F2C;font-weight:700;letter-spacing:-0.3px;">Ririe R</div>
<div class="rbtn" style="left:807.8px;top:1556.3px"></div>
<div class="rbtn" style="left:868px;top:1556.3px"></div>
<svg style="position:absolute;left:822.7px;top:1569.0px" width="22" height="28" viewBox="0 0 22 28">
<path d="M2.5 0 H9.4 Q10.7 0 10.8 1.4 V6.2 Q11 9.5 14.2 9.6 H18.6 Q21 9.6 21 12 V24.3 Q21 26.8 18.5 26.8 H2.5 Q0 26.8 0 24.3 V2.5 Q0 0 2.5 0 Z" fill="#0279AC"/>
<path d="M12.4 0.5 Q20.2 1.5 20.9 8.6 H14.6 Q12.4 8.6 12.4 6.4 Z" fill="#0279AC"/>
<text x="10.6" y="22.3" font-family="Liberation Sans" font-weight="700" font-size="14" fill="#FFFFFF" stroke="#FFFFFF" stroke-width="0.5" text-anchor="middle">$</text></svg>
<svg style="position:absolute;left:880px;top:1568.6px" width="28" height="28" viewBox="0 0 28 28">
<path d="M14.2 2.6 V16.2 M7.2 10.3 L14.2 17.2 L21.2 10.3" fill="none" stroke="#0279AC" stroke-width="3.1" stroke-linecap="round" stroke-linejoin="round"/>
<path d="M4.6 15.6 V18.6 Q4.6 23.4 9.4 23.4 H19 Q23.8 23.4 23.8 18.6 V15.6" fill="none" stroke="#0279AC" stroke-width="3.1" stroke-linecap="round"/></svg>
<div class="t " style="left:1027.5px;top:1560.2px;font-size:17px;color:#0279AC;font-weight:700;letter-spacing:0px;">GP</div>
<div class="t " style="left:1027.0px;top:1585.6px;font-size:18px;color:#3B4254;letter-spacing:0.668px;">Demo Clinic</div>
<div class="t " style="left:1440.2px;top:1559.1px;font-size:18px;color:#2A3142;font-weight:700;letter-spacing:0.076px;">MYR 20.00</div>
<div class="t " style="left:1440.2px;top:1584.9px;font-size:18px;color:#3B4254;letter-spacing:1.29px;">05/08/2025</div>
<div class="t " style="left:1913.6px;top:1571.9px;font-size:18px;color:#3B4254;letter-spacing:0.926px;">Management Tier</div>
<div class="t " style="left:2197.6px;top:1542.6px;font-size:18px;color:#E02C2C;font-weight:700;letter-spacing:0.206px;">Rejected</div>
<div class="t " style="left:2197.6px;top:1572.9px;font-size:18px;color:#4A5468;letter-spacing:0.442px;">05/08/2025, 6:25PM</div>
<div class="t " style="left:2197.6px;top:1602.6px;font-size:18px;color:#4A5468;letter-spacing:0.696px;">by Mednefits via bank transfer</div>
</body></html>
